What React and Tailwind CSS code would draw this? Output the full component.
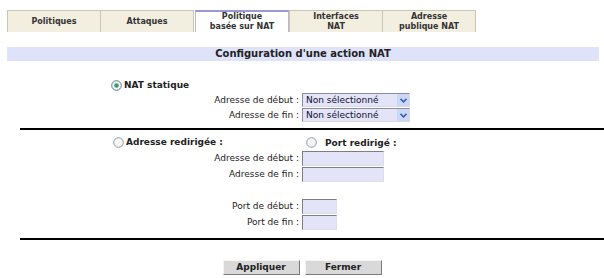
import React from "react";

const font = { fontFamily: '"DejaVu Sans", Verdana, sans-serif' };

const tabs = [
  { label: ["Politiques"] },
  { label: ["Attaques"] },
  { label: ["Politique", "basée sur NAT"], active: true },
  { label: ["Interfaces", "NAT"] },
  { label: ["Adresse", "publique NAT"] },
];

const Radio = ({ checked }) => (
  <svg width="11" height="11" viewBox="0 0 11 11" className="shrink-0">
    <circle cx="5.5" cy="5.5" r="4.8" fill="#f6f6f6" stroke={checked ? "#5d7f8c" : "#8c9ca6"} strokeWidth="1" />
    {checked && <circle cx="5.5" cy="5.5" r="2.3" fill="#3f9a72" />}
  </svg>
);

const Select = () => (
  <div className="flex items-center w-[108px] h-[14px] bg-[#e3e4f7] border-l border-t border-[#8c8c9c] border-r border-b border-r-[#d8d8e8] border-b-[#d8d8e8]">
    <span className="flex-1 pl-[3px] text-[9px] leading-none text-[#101030]">Non sélectionné</span>
    <span className="w-[12px] h-[12px] flex items-center justify-center bg-[#cbd7f5]">
      <svg width="7" height="5" viewBox="0 0 7 5">
        <path d="M0.5 0.8 L3.5 3.8 L6.5 0.8" fill="none" stroke="#3d5fb8" strokeWidth="1.6" />
      </svg>
    </span>
  </div>
);

const Input = ({ w }) => (
  <div className={`${w} h-[15px] bg-[#e4e4f8] border-l border-t border-[#7f7f7f] border-r border-b border-r-[#dcdcec] border-b-[#dcdcec]`} />
);

const Row = ({ label, children, className = "" }) => (
  <div className={`flex items-center ${className}`}>
    <div className="w-[299px] text-right text-[9px] leading-none text-[#222]">{label}</div>
    <div className="ml-[3px]">{children}</div>
  </div>
);

export default function App() {
  return (
    <div className="w-[604px] h-[278px] bg-white overflow-hidden flex flex-col" style={font}>
      {/* onglets */}
      <div className="flex mt-[10px] ml-[7px]">
        {tabs.map((t, i) => (
          <div
            key={i}
            className={`w-[94px] h-[22px] flex flex-col items-center justify-center text-[8px] font-bold leading-[10px] text-[#333] border-l border-r border-t ${
              t.active
                ? "bg-white border-[#b8b8c8] border-t-[#9a9ad0] border-t-2 mx-[1px] w-[93px]"
                : "bg-[#f3efe0] border-[#cbc6b4] -ml-px first:ml-0"
            }`}
          >
            {t.label.map((l) => (
              <span key={l}>{l}</span>
            ))}
          </div>
        ))}
      </div>

      {/* titre */}
      <div className="mt-[15px] ml-[7px] w-[592px] h-[14px] bg-[#dfe3fa] flex items-center justify-center text-[10px] font-bold text-[#222] leading-none">
        Configuration d'une action NAT
      </div>

      <div className="mt-[18px] h-[12px] flex items-center pl-[111px] gap-[2px]">
        <Radio checked />
        <span className="text-[9px] font-bold text-[#222] leading-none">NAT statique</span>
      </div>
      <Row label="Adresse de début :" className="mt-[2px]">
        <Select />
      </Row>
      <Row label="Adresse de fin :" className="mt-[1px]">
        <Select />
      </Row>

      <div className="mt-[6px] ml-[20px] h-[2px] bg-black" />

      <div className="mt-[6px] h-[12px] flex items-center">
        <div className="w-[304px] flex items-center pl-[113px] gap-[2px]">
          <Radio />
          <span className="text-[9px] font-bold text-[#222] leading-none">Adresse redirigée :</span>
        </div>
        <div className="flex items-center ml-[2px] gap-[8px]">
          <Radio />
          <span className="text-[9px] font-bold text-[#222] leading-none mt-[2px]">Port redirigé :</span>
        </div>
      </div>
      <Row label="Adresse de début :" className="mt-[3px]">
        <Input w="w-[82px]" />
      </Row>
      <Row label="Adresse de fin :" className="mt-[1px]">
        <Input w="w-[82px]" />
      </Row>
      <Row label="Port de début :" className="mt-[17px]">
        <Input w="w-[35px]" />
      </Row>
      <Row label="Port de fin :" className="mt-[1px]">
        <Input w="w-[35px]" />
      </Row>

      <div className="mt-[8px] ml-[20px] h-[2px] bg-black" />

      <div className="mt-[20px] flex justify-center gap-[5px] pl-[0px]">
        {["Appliquer", "Fermer"].map((b) => (
          <button
            key={b}
            className="w-[77px] h-[15px] flex items-center justify-center bg-[#d9d9d9] border border-t-[#f4f4f4] border-l-[#f4f4f4] border-r-[#7a7a7a] border-b-[#7a7a7a] text-[9px] font-bold text-[#222] leading-none"
          >
            {b}
          </button>
        ))}
      </div>
    </div>
  );
}
